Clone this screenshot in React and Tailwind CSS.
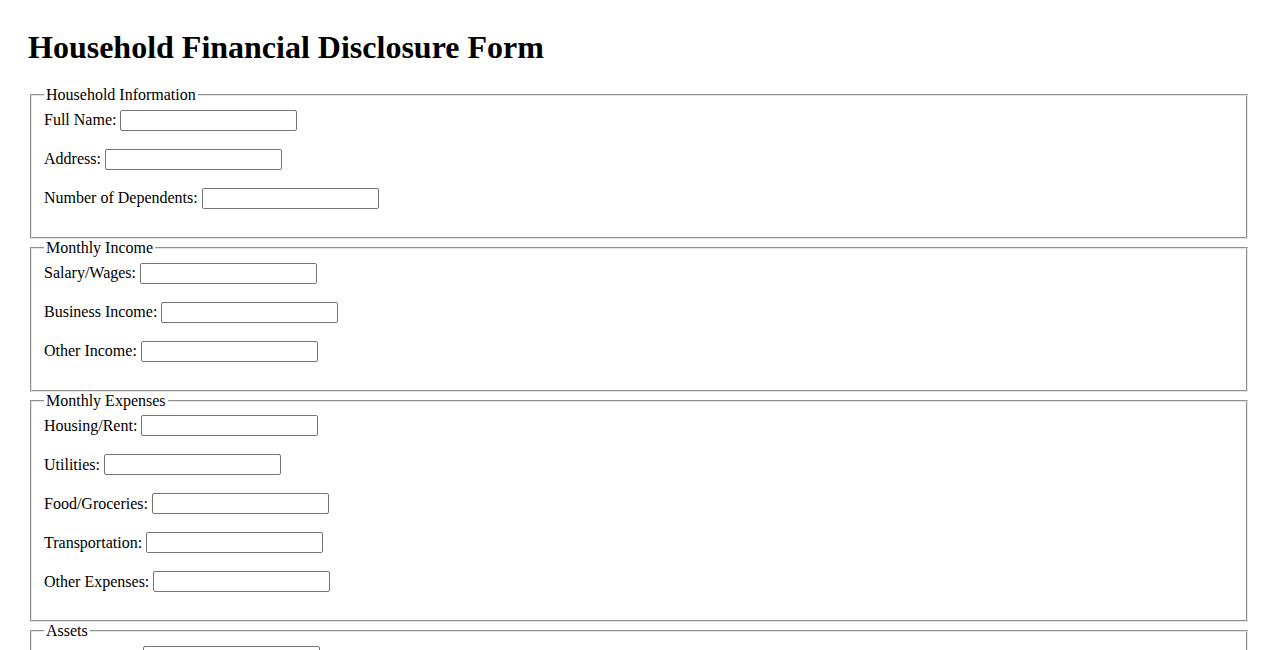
import React from "react";

const sections = [
  {
    title: "Household Information",
    fields: ["Full Name:", "Address:", "Number of Dependents:"],
  },
  {
    title: "Monthly Income",
    fields: ["Salary/Wages:", "Business Income:", "Other Income:"],
  },
  {
    title: "Monthly Expenses",
    fields: [
      "Housing/Rent:",
      "Utilities:",
      "Food/Groceries:",
      "Transportation:",
      "Other Expenses:",
    ],
  },
  {
    title: "Assets",
    fields: ["Cash on Hand:", "Investments:", "Property Value:", "Vehicles:"],
  },
];

const Field = ({ label }) => (
  <div className="flex items-center h-[21px] mb-[18px]">
    <label className="whitespace-pre">{label} </label>
    <input
      type="text"
      className="w-[177px] h-[21px] border border-[#767676] rounded-[2px] px-[2px] py-[1px] bg-white text-[13.33px] font-['Liberation_Sans',sans-serif]"
    />
  </div>
);

const App = () => {
  return (
    <div className="min-h-screen bg-white text-black px-[28px] pt-[30px] font-['Liberation_Serif',serif] text-[16px]">
      <h1 className="text-[32px] font-bold leading-[35.4px] mb-[20.5px]">
        Household Financial Disclosure Form
      </h1>

      <form>
        {sections.map((s) => (
          <fieldset
            key={s.title}
            className="mx-[2px] border-2 [border-style:groove] border-[#e4e4e4] pt-[0.35em] px-3 pb-[10px]"
          >
            <legend className="px-[2px] leading-[18.2px]">{s.title}</legend>
            {s.fields.map((f) => (
              <Field key={f} label={f} />
            ))}
          </fieldset>
        ))}
      </form>
    </div>
  );
};

export default App;
